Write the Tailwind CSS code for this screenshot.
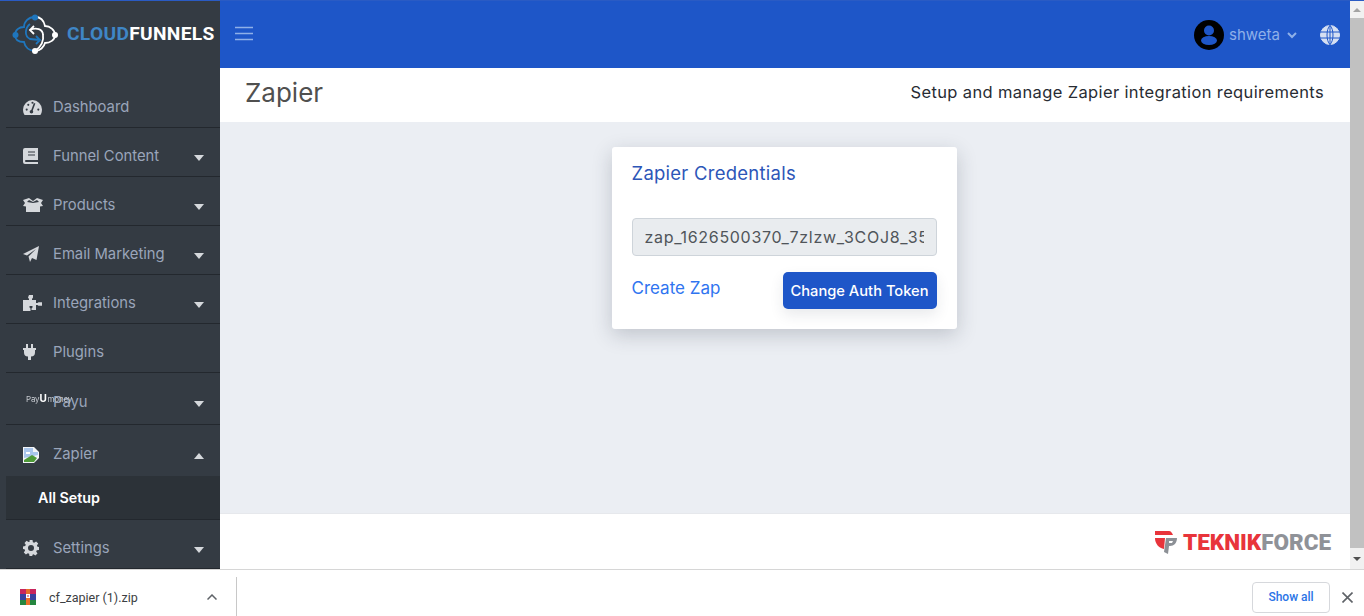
<!DOCTYPE html><html lang="en"><head>
<meta charset="UTF-8">
<title>Zapier</title>
<script src="https://cdn.jsdelivr.net/npm/@tailwindcss/browser@4"></script>
</head>
<body class="h-[616px] w-[1364px] overflow-hidden bg-white font-['Inter','Open_Sans',sans-serif] flex flex-col">
  <div class="flex h-[569px] shrink-0 flex-col">
    <div class="h-px shrink-0 bg-[#2a5bc4]"></div>
    <div class="flex min-h-0 flex-1">
      <!-- Sidebar -->
      <aside class="w-[220px] shrink-0 bg-[#343b43] flex flex-col">
        <div class="flex h-[67px] shrink-0 items-center pl-3">
          <svg class="w-[47px] h-[42px]" viewBox="0 0 47 42" fill="none" stroke-width="1.800">
            <path d="M23 3C16 3 12 8 12 13C7 13 3 16 3 21C3 26 7 28 12 28C13 33 17 37 23 37" stroke="#1f76bd"/>
            <path d="M23 3C29 3 32 7 33 12C38 12 43 16 43 21C43 26 38 29 33 29C32 33 28 37 23 37" stroke="#fff"/>
            <path d="M18 10C13 14 12 22 18 25L28 26M24 22L28 26L24 30" stroke="#1f76bd"/>
            <path d="M18 16C24 13 31 15 31 21C32 27 30 32 23 37M22 12L18 16L22 20" stroke="#fff"/>
            <circle cx="23" cy="3.500" r="3" fill="#1f76bd" stroke="none"/><circle cx="3.500" cy="21" r="3" fill="#1f76bd" stroke="none"/>
            <circle cx="43" cy="21" r="3" fill="#fff" stroke="none"/><circle cx="23" cy="37" r="3" fill="#fff" stroke="none"/>
          </svg>
          <span class="ml-[8px] font-['Roboto',sans-serif] text-[19.200px] font-bold tracking-[0.3px] text-white"><span class="text-[#3f86c6]">CLOUD</span>FUNNELS</span>
        </div>

        <nav class="ml-[6px] flex-1 text-[14.800px] text-[#9aa5ba]">
          <a class="flex h-[60px] items-center border-b border-[#23282e] pl-[17px] pr-[16px] pt-[19px]">
            <svg class="w-[19px] h-[15px] mr-[11px] text-[#d5d8dc]" viewBox="0 0 18 14" fill="currentColor"><path d="M9 0A9 9 0 0 0 0 9c0 2 .5 4 1.500 5h15c1-1 1.500-3 1.500-5A9 9 0 0 0 9 0z"/><path d="M8 11 11 3" stroke="#343b43" stroke-width="1.500"/><circle cx="8" cy="11" r="1.700" fill="#343b43"/><circle cx="3.500" cy="9" r="1" fill="#343b43"/><circle cx="5" cy="4.500" r="1" fill="#343b43"/><circle cx="9" cy="2.500" r="1" fill="#343b43"/><circle cx="14.500" cy="9" r="1" fill="#343b43"/></svg>
            <span>Dashboard</span>
          </a>
          <a class="flex h-[49px] items-center border-b border-[#23282e] pl-[17px] pr-[16px] pt-[8px]">
            <svg class="w-[15px] h-[16px] mr-[15px] text-[#d5d8dc]" viewBox="0 0 15 16" fill="currentColor"><path fill-rule="evenodd" d="M2 0h13v12H3a1 1 0 0 0 0 2h12v2H2a2 2 0 0 1-2-2V2a2 2 0 0 1 2-2zm3 3.500v1h7v-1zm0 3v1h7v-1z"/></svg>
            <span>Funnel Content</span>
            <svg class="ml-auto mt-[3px] w-[10px] h-[6px] text-[#d5d8dc]" viewBox="0 0 10 6" fill="currentColor"><path d="M0 0h10L5 6z"/></svg>
          </a>
          <a class="flex h-[49px] items-center border-b border-[#23282e] pl-[17px] pr-[16px] pt-[8px]">
            <svg class="w-5 h-[14px] mr-[10px] text-[#d5d8dc]" viewBox="0 0 20 14" fill="currentColor"><path d="M0 2 6 0l4 3 4-3 6 2-2 3 2 3-3 .5V14H3V8.500L0 8l2-3zM6 2 4 4l6 1 6-1-2-2-4 2z"/></svg>
            <span>Products</span>
            <svg class="ml-auto mt-[3px] w-[10px] h-[6px] text-[#d5d8dc]" viewBox="0 0 10 6" fill="currentColor"><path d="M0 0h10L5 6z"/></svg>
          </a>
          <a class="flex h-[49px] items-center border-b border-[#23282e] pl-[17px] pr-[16px] pt-[8px]">
            <svg class="w-4 h-4 mr-[14px] text-[#d5d8dc]" viewBox="0 0 16 16" fill="currentColor"><path d="M16 0 13.500 14 9 12 7 16 5.500 10.500 13 3 4 9.500 0 8z"/></svg>
            <span>Email Marketing</span>
            <svg class="ml-auto mt-[3px] w-[10px] h-[6px] text-[#d5d8dc]" viewBox="0 0 10 6" fill="currentColor"><path d="M0 0h10L5 6z"/></svg>
          </a>
          <a class="flex h-[49px] items-center border-b border-[#23282e] pl-[17px] pr-[16px] pt-[8px]">
            <svg class="w-[19px] h-4 mr-[11px] text-[#d5d8dc]" viewBox="0 0 19 16" fill="currentColor"><path d="M6 0h4v2.500L9 4v1h4v3h1.500l1-.8H19v3.600h-3.500l-1-.8H13v5H8.500v-1.500l1-1V11h-3v1.500l1 1V16H0V5h6V4L5 2.500z"/></svg>
            <span>Integrations</span>
            <svg class="ml-auto mt-[3px] w-[10px] h-[6px] text-[#d5d8dc]" viewBox="0 0 10 6" fill="currentColor"><path d="M0 0h10L5 6z"/></svg>
          </a>
          <a class="flex h-[49px] items-center border-b border-[#23282e] pl-[17px] pr-[16px] pt-[8px]">
            <svg class="w-[13px] h-4 mr-[17px] text-[#d5d8dc]" viewBox="0 0 13 16" fill="currentColor"><path d="M3 0h2v4h3V0h2v4h3v2h-1v2.500A4 4 0 0 1 8 12.500V16H5v-3.500A4 4 0 0 1 1 8.500V6H0V4h3z"/></svg>
            <span>Plugins</span>
          </a>
          <a class="relative flex h-[52px] items-center border-b border-[#23282e] pl-[17px] pr-[16px] pt-[8px]">
            <span class="absolute left-[20px] top-[21px] text-[8px] leading-[9px] tracking-[-0.2px] text-[#c6cad0] blur-[0.3px]">Pay<b class="text-[10px] text-white">U</b><span class="ml-[1px]">money</span></span>
            <span class="ml-[30px]">Payu</span>
            <svg class="ml-auto mt-[3px] w-[10px] h-[6px] text-[#d5d8dc]" viewBox="0 0 10 6" fill="currentColor"><path d="M0 0h10L5 6z"/></svg>
          </a>
          <a class="flex h-[51px] items-center pl-[17px] pr-[16px] pt-[8px]">
            <svg class="w-4 h-4 mr-[14px]" viewBox="0 0 16 16"><path d="M0 0h11l5 5v6l-5 5H0z" fill="#f3f5f8"/><path d="M1 1h9v4h5v3L1 11z" fill="#a9c6ec"/><path d="M1 15v-2l8-5 5 3-3 4z" fill="#4e9a38"/><path d="M3 5h4v2H3z" fill="#fff"/></svg>
            <span>Zapier</span>
            <svg class="ml-auto mt-[3px] w-[10px] h-[6px] text-[#d5d8dc]" viewBox="0 0 10 6" fill="currentColor"><path d="M0 6h10L5 0z"/></svg>
          </a>
          <a class="flex h-[44px] items-center border-b border-[#23282e] bg-[#2c3238] pl-[32px] text-[14.300px] font-semibold text-white">All Setup</a>
          <a class="flex h-[49px] items-center border-b border-[#23282e] pl-[17px] pr-[16px] pt-[8px]">
            <svg class="w-4 h-4 mr-[14px] text-[#d5d8dc]" viewBox="0 0 16 16" fill="currentColor"><path fill-rule="evenodd" d="M6.500 0h3l.4 2.200 1.300.6L13.100 1.500l2.100 2.100-1.300 1.900.6 1.300L16 6.900v3l-2.200.4-.6 1.300 1.300 1.900-2.100 2.100-1.900-1.300-1.300.6L9.500 16h-3l-.4-2.200-1.300-.6-1.900 1.300L.8 12.400l1.300-1.900-.6-1.300L0 9V6.500l2.200-.4.600-1.300L1.500 2.900 3.600.8l1.900 1.300 1.300-.6zM8 5a3 3 0 1 0 0 6 3 3 0 0 0 0-6z"/></svg>
            <span>Settings</span>
            <svg class="ml-auto mt-[3px] w-[10px] h-[6px] text-[#d5d8dc]" viewBox="0 0 10 6" fill="currentColor"><path d="M0 0h10L5 6z"/></svg>
          </a>
        </nav>
      </aside>

      <!-- Main column -->
      <div class="flex min-w-0 flex-1 flex-col">
        <header class="flex h-[67px] shrink-0 items-center bg-[#1e56c8] pl-[15px] pr-[10px]">
          <svg class="w-[18px] h-[15px] mb-[2px] text-[#8fb0e8]" viewBox="0 0 18 15" fill="none" stroke="currentColor" stroke-width="1.500"><path d="M0 1.500h18M0 7.500h18M0 13.500h18"/></svg>
          <div class="ml-auto flex items-center">
            <svg class="w-[30px] h-[30px]" viewBox="0 0 30 30"><circle cx="15" cy="15" r="15" fill="#000"/><circle cx="15" cy="10.500" r="5" fill="#1e56c8"/><ellipse cx="15" cy="20.500" rx="8" ry="4.500" fill="#1e56c8"/></svg>
            <span class="ml-[5px] mt-[2px] text-[15px] text-[#8fb0e8]">shweta</span>
            <svg class="ml-[7px] mt-[1px] w-[10px] h-[7px] text-[#8fb0e8]" viewBox="0 0 10 7" fill="none" stroke="currentColor" stroke-width="2"><path d="M1 1l4 4 4-4"/></svg>
            <svg class="ml-[23px] w-5 h-5 text-[#d5dff2]" viewBox="0 0 20 20" fill="none" stroke="currentColor"><circle cx="10" cy="10" r="9.500" fill="currentColor"/><path d="M0 7h20M0 13h20M10 0v20M10 .5C6 4 6 16 10 19.500M10 .5c4 3.500 4 15.500 0 19" stroke="#1e56c8"/></svg>
          </div>
        </header>
        <div class="flex h-[54px] shrink-0 items-center justify-between bg-white pl-[25px] pr-[26px] pb-[6px]">
          <h1 class="mt-[1px] text-[26px] text-[#50504f]">Zapier</h1>
          <p class="text-[16.500px] tracking-[0.37px] text-[#282c33]">Setup and manage Zapier integration requirements</p>
        </div>
        <main class="flex flex-1 justify-center bg-[#ebeef3] pt-[25px]">
          <section class="mr-[2px] h-[182px] w-[345px] rounded-[3px] bg-white px-5 pt-[14px] shadow-[0_6px_20px_rgba(40,50,70,0.22)]">
            <h2 class="text-[18.500px] leading-6 tracking-[0.25px] text-[#2d56b8]">Zapier Credentials</h2>
            <div class="mt-[33px] flex h-[38px] w-[305px] items-center overflow-hidden rounded-[4px] border border-[#ced4da] bg-[#e9ecef] px-3 text-[16px] tracking-[0.7px] whitespace-nowrap text-[#50555a]">
              <span class="block w-full overflow-hidden">zap_1626500370_7zlzw_3COJ8_35XYq</span>
            </div>
            <div class="mt-4 flex items-start justify-between">
              <a class="text-[17px] leading-[33px] text-[#2f74f0]">Create Zap</a>
              <button class="h-[37px] w-[154px] rounded-[5px] bg-[#1e56c8] pt-[1px] text-[14.700px] font-medium text-white shadow-[0_6px_14px_rgba(40,50,70,0.1)]">Change Auth Token</button>
            </div>
          </section>
        </main>
        <footer class="flex h-[56px] shrink-0 items-center justify-end border-t border-[#e6e8ec] bg-white pr-[19px] pt-[3px]">
          <svg class="w-[22px] h-[23px] mr-[6px] mb-[1px]" viewBox="0 0 22 23"><path d="M0 0H14C16 0 17 2 18 4H0z" fill="#e8343b"/><path d="M0 7H10L9 18C4 17 0 13 0 7z" fill="#e8343b"/><path d="M11 7H22C22 12 19 15 15 15H14L13 23L9 21z" fill="#8c9096"/><path d="M14 10H18L17 12H14z" fill="#fff"/></svg>
          <span class="font-['Roboto',sans-serif] text-[22.500px] font-black text-[#e8343b]">TEKNIK<span class="text-[#8f9298]">FORCE</span></span>
        </footer>
      </div>

      <!-- Window scrollbar -->
      <div class="flex w-[14px] shrink-0 flex-col bg-[#f1f1f1]">
        <div class="flex h-[17px] items-center justify-center"><svg class="w-2 h-1" viewBox="0 0 8 4" fill="#a3a3a3"><path d="M0 4h8L4 0z"/></svg></div>
        <div class="flex-1 bg-[#c1c1c1]"></div>
        <div class="flex h-[21px] items-center justify-center"><svg class="w-2 h-1" viewBox="0 0 8 4" fill="#505050"><path d="M0 0h8L4 4z"/></svg></div>
      </div>
    </div>
  </div>

  <!-- Browser download shelf -->
  <div class="flex h-[47px] shrink-0 items-center border-t border-[#d6d6d6] bg-white pt-[8px] font-['Roboto',sans-serif]">
    <svg class="ml-[20px] w-4 h-4 mb-[1px]" viewBox="0 0 16 16"><path d="M0 0h16v5H0z" fill="#c8255d"/><path d="M0 5h16v6H0z" fill="#39419f"/><path d="M0 11h16v5H0z" fill="#25863f"/><path d="M6 0h4v16H6z" fill="#e8702a"/><path d="M6 5h4v4H6z" fill="#fff"/><path d="M7.500 6h1v2h-1z" fill="#c8255d"/></svg>
    <span class="ml-[13px] mt-[3px] text-[12.500px] text-[#3c4043]">cf_zapier (1).zip</span>
    <svg class="ml-[69px] w-[10px] h-[6px]" viewBox="0 0 10 6" fill="none" stroke="#5f6368" stroke-width="1.500"><path d="M.5 5.500 5 1l4.500 4.500"/></svg>
    <div class="ml-[19px] h-[39px] w-px self-end bg-[#c8c8c8]"></div>
    <button class="ml-auto mr-[12px] h-[31px] w-[78px] rounded-[4px] border border-[#d6d8dc] text-[12px] font-medium text-[#2b74e6]">Show all</button>
    <svg class="mr-[11px] w-[11px] h-[11px]" viewBox="0 0 11 11" fill="none" stroke="#5f6368" stroke-width="1.600"><path d="M.5.5l10 10M10.500.5l-10 10"/></svg>
  </div>
</body></html>
